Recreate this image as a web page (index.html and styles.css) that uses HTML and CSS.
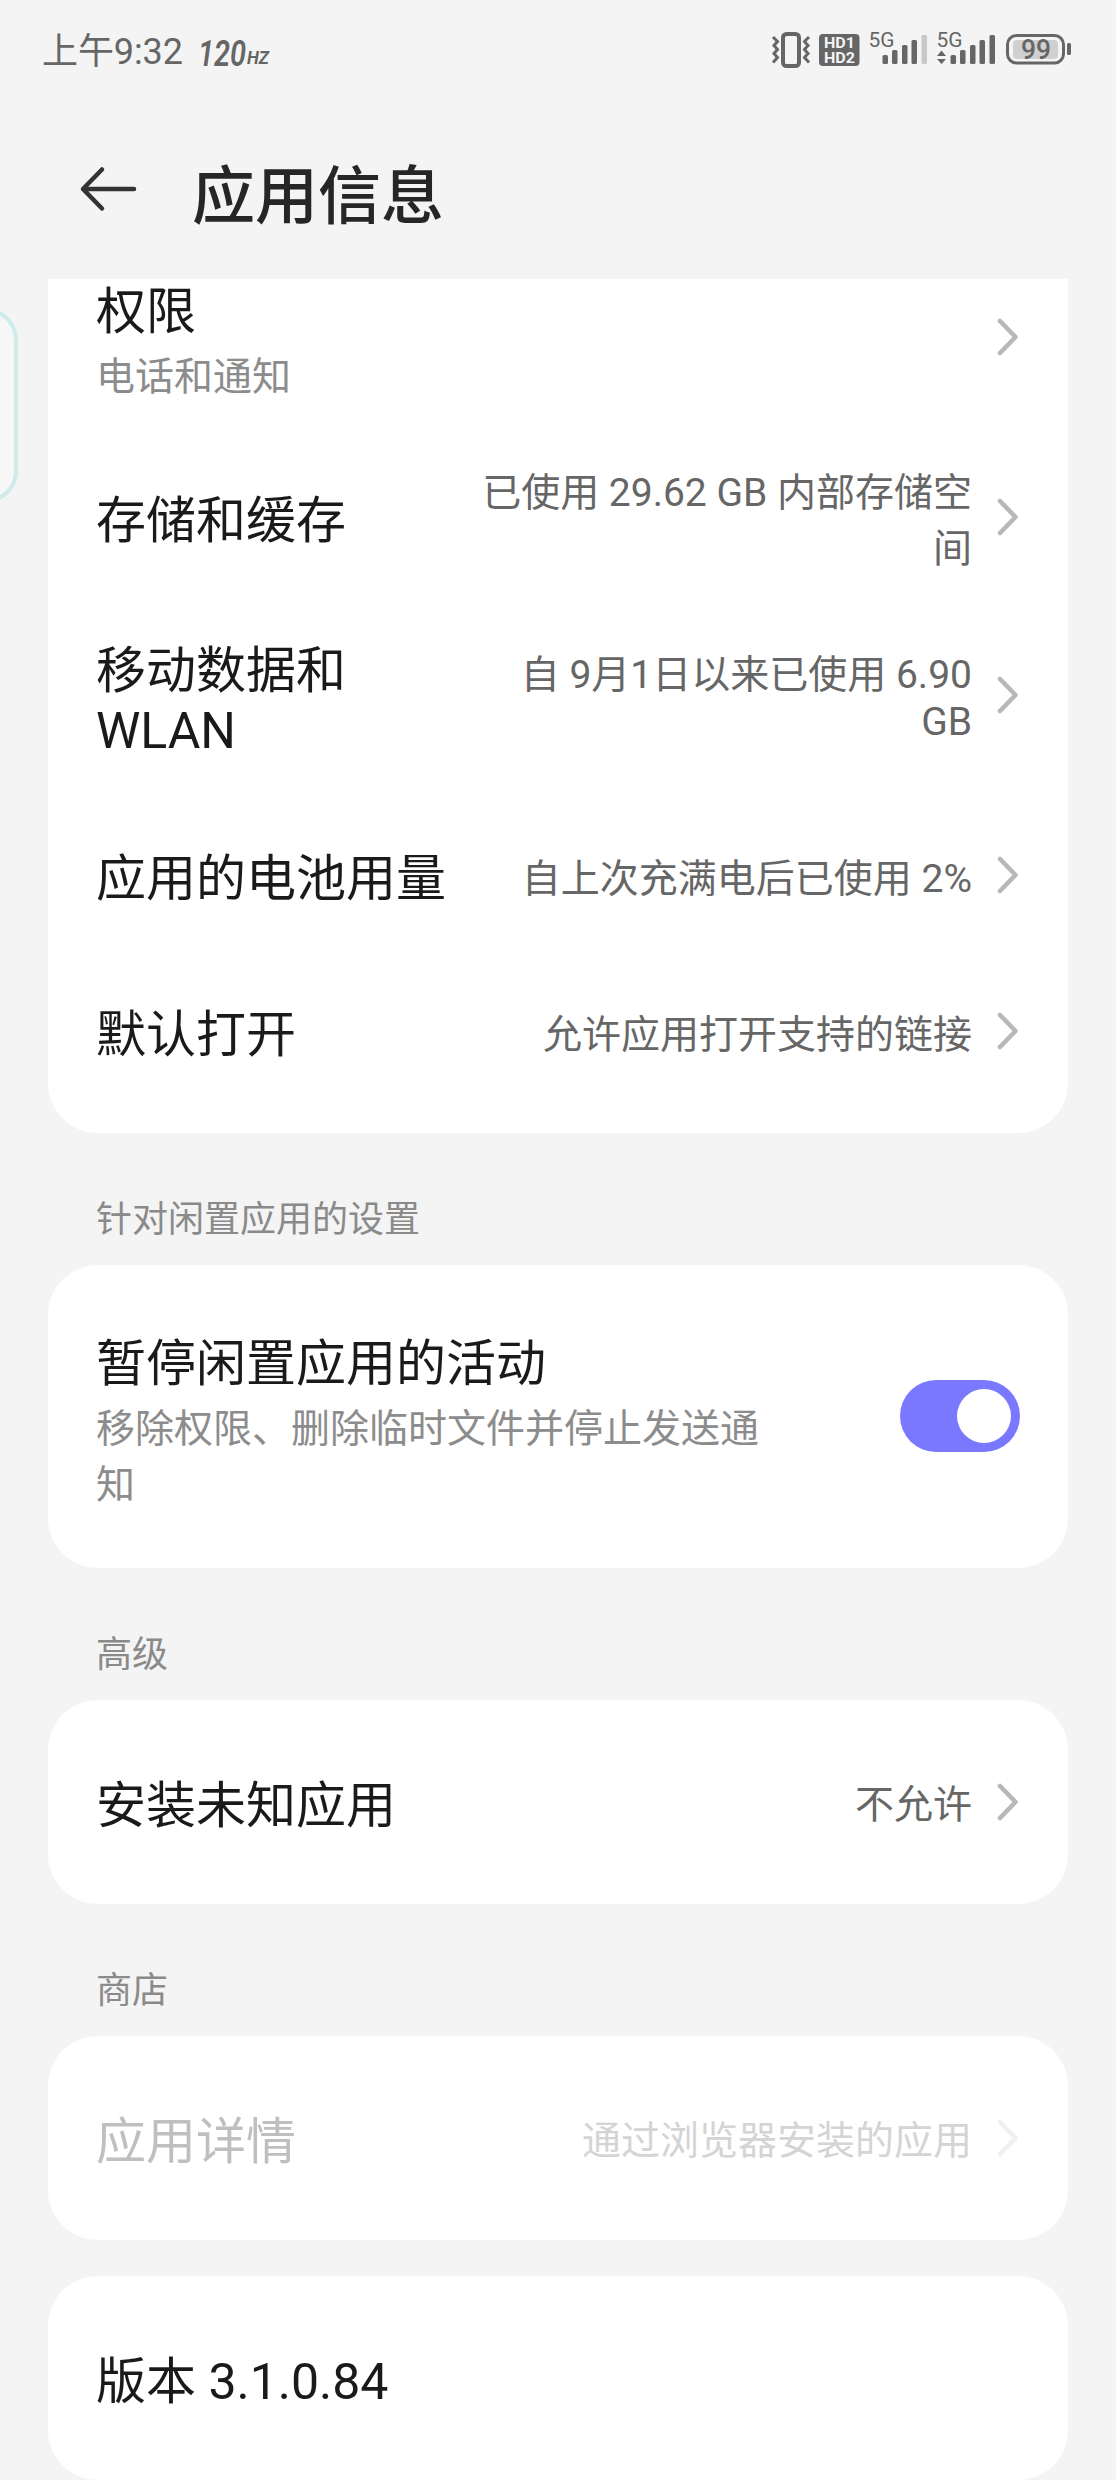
FILE: index.html
```html
<!DOCTYPE html>
<html lang="zh-CN">
<head>
  <meta charset="UTF-8">
  <meta content="width=device-width, initial-scale=1.0" name="viewport">
  <title>应用信息</title>
  <link rel="stylesheet" href="styles.css">
</head>
<body>
<svg class="defs" width="0" height="0">
  <symbol id="chevron" viewBox="0 0 22 38">
    <path d="M3 3L18.500 19L3 35" fill="none" stroke="currentColor" stroke-width="4.600" stroke-linecap="round" stroke-linejoin="round"/>
  </symbol>
</svg>

<div class="status-bar">
  <span class="time">上午9:32</span>
  <svg class="rate" width="76" height="60" viewBox="0 -10 76 60">
    <text class="rate-num" x="0" y="36" textLength="48" lengthAdjust="spacingAndGlyphs">120</text>
    <text class="rate-unit" x="49" y="34" textLength="22" lengthAdjust="spacingAndGlyphs">HZ</text>
  </svg>
  <!-- 振动 / HD / 信号 / 电池 -->
  <svg class="status-icons" width="304" height="60" viewBox="770 20 304 60">
    <g fill="none" stroke="#666" stroke-width="3">
      <rect x="783" y="34" width="16" height="32" rx="3.500" stroke-width="4"/>
      <path d="M773 37l4.500 4.500l-3.500 4l3.500 4l-3.500 4l3.500 4l-4.500 5M809 37l-4.500 4.500l3.500 4l-3.500 4l3.500 4l-3.500 4l4.500 5"/>
    </g>
    <rect x="819" y="34" width="40.500" height="32" rx="4" fill="#666"/>
    <text class="hd" x="824" y="48.200" textLength="31" lengthAdjust="spacingAndGlyphs">HD1</text>
    <text class="hd" x="824" y="62.800" textLength="31" lengthAdjust="spacingAndGlyphs">HD2</text>
    <text class="net" x="868.500" y="46.500" textLength="26" lengthAdjust="spacingAndGlyphs">5G</text>
    <g fill="#666">
      <rect x="882.500" y="55" width="5.500" height="9" rx="1.500"/>
      <rect x="892" y="50" width="5.500" height="14" rx="1.500"/>
      <rect x="902" y="45" width="5.500" height="19" rx="1.500"/>
      <rect x="911.500" y="40" width="5.500" height="24" rx="1.500"/>
      <rect x="921.500" y="35" width="5.500" height="29" rx="1.500" fill="#c8c8c8"/>
    </g>
    <text class="net" x="936.500" y="46.500" textLength="26" lengthAdjust="spacingAndGlyphs">5G</text>
    <g fill="#666">
      <path d="M941.500 50.500l4.500 5.500h-9zM941.500 64l4.500-5h-9z"/>
      <rect x="950.500" y="55" width="5.500" height="9" rx="1.500"/>
      <rect x="960" y="50" width="5.500" height="14" rx="1.500"/>
      <rect x="970" y="45" width="5.500" height="19" rx="1.500"/>
      <rect x="979.500" y="40" width="5.500" height="24" rx="1.500"/>
      <rect x="989.500" y="35" width="5.500" height="29" rx="1.500"/>
    </g>
    <rect x="1007.500" y="35.500" width="56" height="27.500" rx="9" fill="none" stroke="#666" stroke-width="3"/>
    <rect x="1013" y="40" width="45" height="19" rx="4" fill="#d0d0d0"/>
    <rect x="1067" y="43" width="4" height="12" rx="1.500" fill="#666"/>
    <text class="battery" x="1021" y="58.800" textLength="30" lengthAdjust="spacingAndGlyphs">99</text>
  </svg>
</div>

<header class="header">
  <svg width="60" height="48" viewBox="0 0 60 48">
    <path d="M25 4.500L6 24L25 43.500M6 24H57" fill="none" stroke="#333" stroke-width="4.500" stroke-linecap="round" stroke-linejoin="round"/>
  </svg>
  <h1>应用信息</h1>
</header>

<main>
  <section class="card card-scrolled">
    <div class="row row-permission">
      <div class="label">权限<div class="summary">电话和通知</div></div>
      <svg class="chevron"><use href="#chevron"/></svg>
    </div>
    <div class="row row-storage">
      <div class="label">存储和缓存</div>
      <div class="value">已使用 29.62 GB 内部存储空<br>间</div>
      <svg class="chevron"><use href="#chevron"/></svg>
    </div>
    <div class="row row-data">
      <div class="label">移动数据和<br>WLAN</div>
      <div class="value">自 9月1日以来已使用 6.90<br>GB</div>
      <svg class="chevron"><use href="#chevron"/></svg>
    </div>
    <div class="row">
      <div class="label">应用的电池用量</div>
      <div class="value">自上次充满电后已使用 2%</div>
      <svg class="chevron"><use href="#chevron"/></svg>
    </div>
    <div class="row">
      <div class="label">默认打开</div>
      <div class="value">允许应用打开支持的链接</div>
      <svg class="chevron"><use href="#chevron"/></svg>
    </div>
  </section>

  <h2>针对闲置应用的设置</h2>
  <section class="card">
    <div class="row row-switch">
      <div class="label">暂停闲置应用的活动<div class="summary">移除权限、删除临时文件并停止发送通<br>知</div></div>
      <div class="switch"><div class="knob"></div></div>
    </div>
  </section>

  <h2>高级</h2>
  <section class="card">
    <div class="row row-single">
      <div class="label">安装未知应用</div>
      <div class="value">不允许</div>
      <svg class="chevron"><use href="#chevron"/></svg>
    </div>
  </section>

  <h2>商店</h2>
  <section class="card">
    <div class="row row-single disabled">
      <div class="label">应用详情</div>
      <div class="value">通过浏览器安装的应用</div>
      <svg class="chevron"><use href="#chevron"/></svg>
    </div>
  </section>

  <section class="card card-version">
    <div class="row row-single">
      <div class="label">版本 3.1.0.84</div>
    </div>
  </section>
</main>

<!-- 侧边栏手柄 -->
<div class="edge-panel"></div>
</body>
</html>
```

FILE: styles.css
```css
* {
  box-sizing: border-box;
}

body {
  margin: 0;
  height: 2480px;
  overflow: hidden;
  position: relative;
  background: #f4f4f4;
  color: #1a1a1a;
  font-family: Roboto, "Noto Sans CJK SC", sans-serif;
}

.defs {
  display: block;
}

.status-bar {
  display: flex;
  align-items: flex-start;
  height: 100px;
  padding: 20px 42px 0;
  color: #666;
}

.time {
  width: 155px;
  padding-top: 8px;
  font-size: 36px;
  line-height: 48px;
  letter-spacing: -0.1px;
  white-space: nowrap;
}

.rate {
  margin-left: 1px;
}

.status-icons {
  margin-left: auto;
}

.rate-num, .rate-unit {
  fill: #666;
  font-weight: 600;
  font-style: italic;
}

.rate-num {
  font-size: 37px;
}

.rate-unit {
  font-size: 18px;
  font-weight: 700;
}

.hd {
  fill: #f4f4f4;
  font-size: 15px;
  font-weight: 700;
}

.net {
  fill: #666;
  font-size: 21px;
}

.battery {
  fill: #666;
  font-size: 27px;
  font-weight: 500;
}

.header {
  display: flex;
  align-items: center;
  height: 179px;
  padding: 0 0 1px 77px;
}

h1 {
  margin: 15px 0 0 55px;
  font-size: 63px;
  line-height: 80px;
  font-weight: 500;
  color: #262626;
}

main {
  padding: 0 48px;
}

.card {
  padding: 0 48px;
  border-radius: 50px;
  background: #fff;
}

.card-scrolled {
  height: 854px;
  border-radius: 0 0 50px 50px;
}

.card-version {
  margin-top: 36px;
}

.row {
  display: flex;
  align-items: center;
  height: 156px;
}

.row-permission {
  height: 164px;
  padding-bottom: 44px;
}

.row-storage {
  height: 152px;
}

.row-data {
  height: 204px;
}

.row-switch {
  height: 303px;
  padding-bottom: 2px;
}

.row-single {
  height: 204px;
  padding-top: 3px;
}

.label {
  padding-top: 4px;
  font-size: 50px;
  line-height: 60px;
  white-space: nowrap;
}

.row-data .label {
  padding-top: 8px;
}

.row-permission .label {
  padding-top: 9px;
}

.row-switch .label {
  padding-top: 15px;
}

.summary {
  padding-top: 7px;
  font-size: 39px;
  line-height: 56px;
  color: #8c8c8c;
}

.value {
  margin-left: auto;
  padding-top: 3px;
  font-size: 39px;
  line-height: 56px;
  text-align: right;
  white-space: nowrap;
  color: #666;
}

.row-data .value {
  line-height: 47px;
}

.chevron {
  width: 22px;
  height: 38px;
  margin: 0 1px 4px 25px;
  color: #b8b8b8;
}

.row-permission .chevron {
  margin-left: auto;
}

.disabled .label {
  color: #bfbfbf;
}

.disabled .value {
  color: #d4d4d4;
}

.disabled .chevron {
  color: #f0f0f0;
}

h2 {
  margin: 0;
  padding: 59px 48px 17px;
  font-size: 36px;
  line-height: 56px;
  font-weight: 400;
  color: #8a8a8a;
}

.switch {
  display: flex;
  justify-content: flex-end;
  width: 120px;
  height: 72px;
  margin-left: auto;
  padding: 9px;
  border-radius: 36px;
  background: #7a78ff;
}

.knob {
  width: 54px;
  height: 54px;
  border-radius: 50%;
  background: #fff;
}

.edge-panel {
  position: absolute;
  left: -46px;
  top: 308px;
  width: 64px;
  height: 195px;
  border: 4px solid #cdeceb;
  border-radius: 32px;
  background: #f7f7f7;
}
```
